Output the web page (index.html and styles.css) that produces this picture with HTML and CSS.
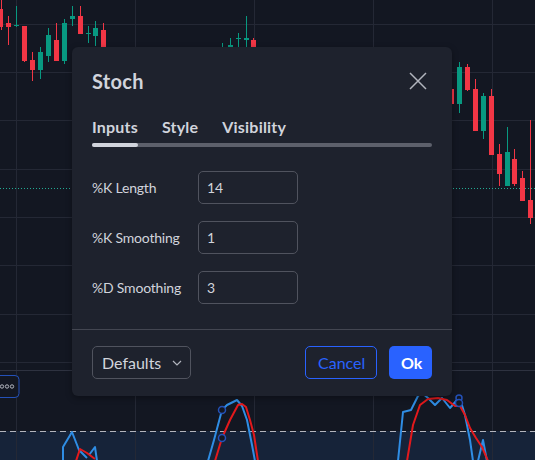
FILE: index.html
```html
<!DOCTYPE html>
<html>
<head>
<meta charset="utf-8">
<link rel="stylesheet" href="styles.css">
</head>
<body>
<div class="chart">
<svg class="chart-svg" width="535" height="460" viewBox="0 0 535 460" xmlns="http://www.w3.org/2000/svg">
  <rect x="0" y="0" width="535" height="460" fill="#131722"/>
  <rect x="0" y="431" width="535" height="29" fill="#162339"/>
  <g stroke="#242835" stroke-width="1">
    <line x1="16.5" y1="0" x2="16.5" y2="460"/>
    <line x1="135.5" y1="0" x2="135.5" y2="460"/>
    <line x1="254.5" y1="0" x2="254.5" y2="460"/>
    <line x1="373.5" y1="0" x2="373.5" y2="460"/>
    <line x1="492.5" y1="0" x2="492.5" y2="460"/>
    <line x1="0" y1="24.5" x2="535" y2="24.5"/>
    <line x1="0" y1="72.5" x2="535" y2="72.5"/>
    <line x1="0" y1="120.5" x2="535" y2="120.5"/>
    <line x1="0" y1="169.5" x2="535" y2="169.5"/>
    <line x1="0" y1="217.5" x2="535" y2="217.5"/>
    <line x1="0" y1="265.5" x2="535" y2="265.5"/>
    <line x1="0" y1="314.5" x2="535" y2="314.5"/>
    <line x1="0" y1="362.5" x2="535" y2="362.5"/>
  </g>
  <line x1="0" y1="370.5" x2="535" y2="370.5" stroke="#2e3240"/>
  <line x1="0" y1="188.5" x2="535" y2="188.5" stroke="#22ab94" stroke-dasharray="1 2"/>
  <!-- candles: wicks -->
  <g stroke-width="1">
    <line x1="1.5" y1="0" x2="1.5" y2="30" stroke="#f23645"/>
    <line x1="8.5" y1="16" x2="8.5" y2="45" stroke="#f23645"/>
    <line x1="16.5" y1="6" x2="16.5" y2="27" stroke="#089981"/>
    <line x1="24.5" y1="26" x2="24.5" y2="62" stroke="#f23645"/>
    <line x1="32.5" y1="52" x2="32.5" y2="81" stroke="#f23645"/>
    <line x1="40.5" y1="47" x2="40.5" y2="79" stroke="#089981"/>
    <line x1="48.5" y1="28" x2="48.5" y2="62" stroke="#089981"/>
    <line x1="56.5" y1="23" x2="56.5" y2="61" stroke="#f23645"/>
    <line x1="64.5" y1="19" x2="64.5" y2="64" stroke="#089981"/>
    <line x1="72.5" y1="6" x2="72.5" y2="26" stroke="#089981"/>
    <line x1="80.5" y1="6" x2="80.5" y2="34" stroke="#f23645"/>
    <line x1="88.5" y1="26" x2="88.5" y2="43" stroke="#089981"/>
    <line x1="95.5" y1="21" x2="95.5" y2="46" stroke="#089981"/>
    <line x1="103.5" y1="23" x2="103.5" y2="50" stroke="#f23645"/>
    <line x1="222.5" y1="43" x2="222.5" y2="50" stroke="#089981"/>
    <line x1="230.5" y1="38" x2="230.5" y2="50" stroke="#089981"/>
    <line x1="238.5" y1="33" x2="238.5" y2="50" stroke="#089981"/>
    <line x1="246.5" y1="16" x2="246.5" y2="50" stroke="#089981"/>
    <line x1="253.5" y1="38" x2="253.5" y2="50" stroke="#f23645"/>
    <line x1="459.5" y1="62" x2="459.5" y2="113" stroke="#089981"/>
    <line x1="467.5" y1="64" x2="467.5" y2="91" stroke="#f23645"/>
    <line x1="475.5" y1="79" x2="475.5" y2="131" stroke="#f23645"/>
    <line x1="483.5" y1="93" x2="483.5" y2="139" stroke="#089981"/>
    <line x1="491.5" y1="89" x2="491.5" y2="155" stroke="#f23645"/>
    <line x1="499.5" y1="144" x2="499.5" y2="186" stroke="#f23645"/>
    <line x1="507.5" y1="127" x2="507.5" y2="186" stroke="#089981"/>
    <line x1="514.5" y1="149" x2="514.5" y2="186" stroke="#f23645"/>
    <line x1="522.5" y1="171" x2="522.5" y2="201" stroke="#f23645"/>
    <line x1="530.5" y1="120" x2="530.5" y2="224" stroke="#f23645"/>
  </g>
  <!-- candles: bodies -->
  <g>
    <rect x="0" y="9" width="3" height="18" fill="#f23645"/>
    <rect x="6" y="23" width="5" height="4" fill="#f23645"/>
    <rect x="14" y="25" width="5" height="1" fill="#089981"/>
    <rect x="22" y="26" width="5" height="35" fill="#f23645"/>
    <rect x="30" y="60" width="5" height="10" fill="#f23645"/>
    <rect x="38" y="52" width="5" height="18" fill="#089981"/>
    <rect x="46" y="35" width="5" height="21" fill="#089981"/>
    <rect x="54" y="40" width="5" height="21" fill="#f23645"/>
    <rect x="62" y="23" width="5" height="38" fill="#089981"/>
    <rect x="70" y="16" width="5" height="3" fill="#089981"/>
    <rect x="78" y="16" width="5" height="18" fill="#f23645"/>
    <rect x="86" y="33" width="5" height="1" fill="#089981"/>
    <rect x="93" y="28" width="5" height="8" fill="#089981"/>
    <rect x="101" y="30" width="5" height="20" fill="#f23645"/>
    <rect x="228" y="45" width="5" height="2" fill="#089981"/>
    <rect x="236" y="38" width="5" height="1" fill="#089981"/>
    <rect x="244" y="38" width="5" height="2" fill="#089981"/>
    <rect x="251" y="40" width="5" height="10" fill="#f23645"/>
    <rect x="450" y="89" width="4" height="15" fill="#f23645"/>
    <rect x="457" y="67" width="5" height="37" fill="#089981"/>
    <rect x="465" y="67" width="5" height="23" fill="#f23645"/>
    <rect x="473" y="89" width="5" height="42" fill="#f23645"/>
    <rect x="481" y="96" width="5" height="35" fill="#089981"/>
    <rect x="489" y="96" width="5" height="59" fill="#f23645"/>
    <rect x="497" y="154" width="5" height="20" fill="#f23645"/>
    <rect x="505" y="152" width="5" height="34" fill="#089981"/>
    <rect x="512" y="159" width="5" height="25" fill="#f23645"/>
    <rect x="520" y="178" width="5" height="23" fill="#f23645"/>
    <rect x="528" y="200" width="5" height="18" fill="#f23645"/>
  </g>
  <line x1="0" y1="431.5" x2="535" y2="431.5" stroke="#b2b5be" stroke-dasharray="6 4"/>
  <!-- stoch lines -->
  <g fill="none" stroke-width="2" stroke-linejoin="round">
    <polyline stroke="#2f8de4" points="63,461 63,447 72,432 79,450 87,458"/>
    <polyline stroke="#2f8de4" points="89,455 95,447 97,461"/>
    <polyline stroke="#e3191c" points="76,461 80,449 87,453 95,459"/>
    <polyline stroke="#2f8de4" points="208,461 214,440 222,410 227,405 237,400 242,406 247,420 252,445 255,461"/>
    <polyline stroke="#e3191c" points="215,461 222,438 230,420 238,405 242,404 246,407 250,420 254,435 258,461"/>
    <polyline stroke="#2f8de4" points="398,461 403,412 411,410 415,402 418,396 422,393 428,398 435,405 442,398 450,408 457,400 461,402 465,415 470,440 473,461"/>
    <polyline stroke="#2f8de4" points="478,461 483,440 487,461"/>
    <polyline stroke="#e3191c" points="407,461 413,425 420,405 428,399 438,398 447,400 455,406 460,406 465,415 470,428 476,438 482,447 488,461"/>
  </g>
  <g fill="#131722" stroke="#2451b8" stroke-width="1.5">
    <circle cx="222" cy="410" r="3.5"/>
    <circle cx="222" cy="438" r="3.5"/>
    <circle cx="459" cy="398" r="3"/>
    <circle cx="459" cy="403" r="3.5"/>
  </g>
  <!-- legend more button -->
  <rect x="-6" y="375.5" width="25" height="22" rx="4" fill="#131722" stroke="#2451b8"/>
  <g fill="none" stroke="#b2b5be" stroke-width="1">
    <circle cx="2" cy="386.5" r="1.7"/>
    <circle cx="7" cy="386.5" r="1.7"/>
    <circle cx="12" cy="386.5" r="1.7"/>
  </g>
</svg>
</div>

<div class="dialog">
  <div class="dialog-header">
    <div class="dialog-title">Stoch</div>
    <button class="close-btn" aria-label="Close">
      <svg width="18" height="18" viewBox="0 0 18 18"><path d="M1 1L17 17M17 1L1 17" stroke="#b2b5be" stroke-width="1.5" fill="none"/></svg>
    </button>
  </div>
  <div class="tabs">
    <span class="tab tab-active">Inputs</span>
    <span class="tab">Style</span>
    <span class="tab">Visibility</span>
  </div>
  <div class="tab-track"><div class="tab-indicator"></div></div>
  <div class="form">
    <div class="form-row">
      <label class="form-label">%K Length</label>
      <div class="form-input">14</div>
    </div>
    <div class="form-row">
      <label class="form-label">%K Smoothing</label>
      <div class="form-input">1</div>
    </div>
    <div class="form-row">
      <label class="form-label">%D Smoothing</label>
      <div class="form-input">3</div>
    </div>
  </div>
  <div class="dialog-sep"></div>
  <div class="dialog-footer">
    <div class="select">
      <span>Defaults</span>
      <svg width="10" height="6" viewBox="0 0 10 6"><path d="M1 1L5 5L9 1" stroke="#b2b5be" stroke-width="1.2" fill="none"/></svg>
    </div>
    <div class="footer-right">
      <button class="btn btn-cancel">Cancel</button>
      <button class="btn btn-ok">Ok</button>
    </div>
  </div>
</div>
</body>
</html>
```
FILE: styles.css
```css
html, body {
  margin: 0;
  padding: 0;
  width: 535px;
  height: 460px;
  overflow: hidden;
  background: #131722;
  font-family: "Lato", "Liberation Sans", sans-serif;
  color: #d1d4dc;
}

.chart {
  position: absolute;
  left: 0;
  top: 0;
  width: 535px;
  height: 460px;
}

.chart-svg {
  display: block;
}

.dialog {
  position: absolute;
  left: 72px;
  top: 47px;
  width: 380px;
  height: 349px;
  box-sizing: border-box;
  background: #1e222d;
  border-radius: 6px;
  box-shadow: 0 2px 6px rgba(0, 0, 0, 0.35);
  display: flex;
  flex-direction: column;
}

.dialog-header {
  display: flex;
  align-items: center;
  justify-content: space-between;
  height: 28px;
  margin-top: 20px;
  padding: 0 25px 0 20px;
}

.dialog-title {
  font-size: 20px;
  font-weight: 700;
  line-height: 28px;
  letter-spacing: 0.3px;
  color: #d1d4dc;
}

.close-btn {
  width: 18px;
  height: 18px;
  padding: 0;
  border: 0;
  background: none;
  display: flex;
}

.tabs {
  display: flex;
  gap: 24px;
  margin-top: 22px;
  padding: 0 20px;
  height: 20px;
  align-items: center;
}

.tab {
  font-size: 16px;
  font-weight: 700;
  line-height: 20px;
  letter-spacing: 0.2px;
  color: #d1d4dc;
}

.tab-track {
  margin: 6px 20px 0 20px;
  height: 4px;
  border-radius: 2px;
  background: #5d606b;
}

.tab-indicator {
  width: 46px;
  height: 4px;
  border-radius: 2px;
  background: #d1d4dc;
}

.form {
  display: flex;
  flex-direction: column;
  gap: 17px;
  margin-top: 24px;
  padding: 0 20px;
}

.form-row {
  display: flex;
  align-items: center;
  height: 33px;
}

.form-label {
  width: 106px;
  font-size: 14px;
  letter-spacing: -0.2px;
  color: #d1d4dc;
}

.form-input {
  width: 100px;
  height: 33px;
  box-sizing: border-box;
  border: 1px solid #50535e;
  border-radius: 5px;
  padding: 0 8px;
  display: flex;
  align-items: center;
  font-size: 14px;
  color: #d1d4dc;
}

.dialog-sep {
  margin-top: 25px;
  height: 1px;
  background: #434651;
}

.dialog-footer {
  display: flex;
  justify-content: space-between;
  align-items: center;
  margin-top: 16px;
  padding: 0 20px;
}

.select {
  width: 99px;
  height: 33px;
  box-sizing: border-box;
  border: 1px solid #50535e;
  border-radius: 5px;
  padding: 0 8px 0 9px;
  display: flex;
  align-items: center;
  justify-content: space-between;
  font-size: 16px;
  color: #d1d4dc;
}

.footer-right {
  display: flex;
  gap: 12px;
}

.btn {
  height: 33px;
  box-sizing: border-box;
  border-radius: 5px;
  padding: 0 12px;
  font-family: "Lato", "Liberation Sans", sans-serif;
  font-size: 16px;
}

.btn-cancel {
  width: 72px;
  background: transparent;
  border: 1px solid #2962ff;
  color: #2962ff;
}

.btn-ok {
  width: 43px;
  background: #2962ff;
  border: 0;
  color: #ffffff;
  font-weight: 700;
}
```
